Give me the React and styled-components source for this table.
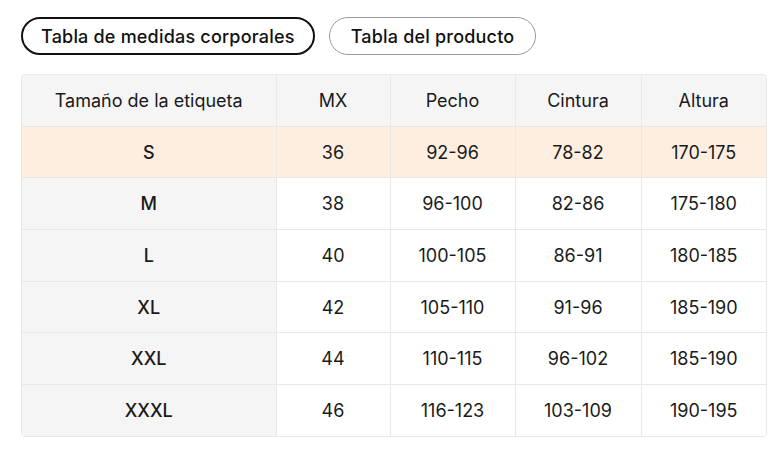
import styled, { createGlobalStyle } from "styled-components";

const GlobalStyle = createGlobalStyle`
    body {
        margin: 0;
        background: #ffffff;
        font-family: Inter, "Noto Sans", sans-serif;
        color: #1a1a1a;
    }
`;

const rows = [
    ["S", "36", "92-96", "78-82", "170-175"],
    ["M", "38", "96-100", "82-86", "175-180"],
    ["L", "40", "100-105", "86-91", "180-185"],
    ["XL", "42", "105-110", "91-96", "185-190"],
    ["XXL", "44", "110-115", "96-102", "185-190"],
    ["XXXL", "46", "116-123", "103-109", "190-195"],
];

const headers = ["Tamaño de la etiqueta", "MX", "Pecho", "Cintura", "Altura"];
const widths = [254, 114, 125, 126, 125];

const App = () => {
    return (
        <>
            <GlobalStyle />
            <Page>
                <Tabs>
                    <Tab active>Tabla de medidas corporales</Tab>
                    <Tab>Tabla del producto</Tab>
                </Tabs>
                <TableWrap>
                    <Table>
                        <colgroup>
                            {widths.map((w, i) => (
                                <col key={i} style={{ width: w }} />
                            ))}
                        </colgroup>
                        <thead>
                            <tr>
                                {headers.map((h) => (
                                    <Th key={h}>{h}</Th>
                                ))}
                            </tr>
                        </thead>
                        <tbody>
                            {rows.map((r, i) => (
                                <Row key={r[0]} highlight={i === 0}>
                                    {r.map((c, j) => (
                                        <Td key={j} label={j === 0}>
                                            {c}
                                        </Td>
                                    ))}
                                </Row>
                            ))}
                        </tbody>
                    </Table>
                </TableWrap>
            </Page>
        </>
    );
};

const Page = styled.div`
    padding: 17px 13px 0 21px;
`;

const Tabs = styled.div`
    display: flex;
    gap: 14px;
`;

const Tab = styled.button`
    height: 38px;
    padding: 0 ${(p) => (p.active ? "18px" : "21px")};
    border-radius: 19px;
    border: ${(p) => (p.active ? "2px solid #111111" : "1px solid #9a9a9a")};
    background: #ffffff;
    font-family: Inter, "Noto Sans", sans-serif;
    font-size: 18px;
    font-weight: 500;
    letter-spacing: 0.2px;
    color: #111111;
    cursor: pointer;
`;

const TableWrap = styled.div`
    margin-top: 19px;
    width: 744px;
    border: 1px solid #e8e8e8;
    border-radius: 4px;
    overflow: hidden;
`;

const Table = styled.table`
    width: 100%;
    table-layout: fixed;
    border-collapse: collapse;
`;

const Th = styled.th`
    height: 50.7px;
    padding: 0;
    background: #f5f5f5;
    font-size: 18px;
    font-weight: 400;
    color: #1a1a1a;
    text-align: center;
    border-left: 1px solid #e8e8e8;
    border-bottom: 1px solid #e8e8e8;
    &:first-child {
        border-left: none;
    }
`;

const Row = styled.tr`
    background: ${(p) => (p.highlight ? "#fdeee0" : "#ffffff")};
    &:last-child td {
        border-bottom: none;
    }
`;

const Td = styled.td`
    height: 50.7px;
    padding: 0;
    font-size: 18px;
    font-weight: ${(p) => (p.label ? 500 : 400)};
    text-align: center;
    color: #1a1a1a;
    border-left: 1px solid #e8e8e8;
    border-bottom: 1px solid #e8e8e8;
    ${(p) => p.label && "background: #f5f5f5; border-left: none;"}
    tr:first-child > & {
        ${(p) => p.label && "background: transparent;"}
    }
`;

export default App;
